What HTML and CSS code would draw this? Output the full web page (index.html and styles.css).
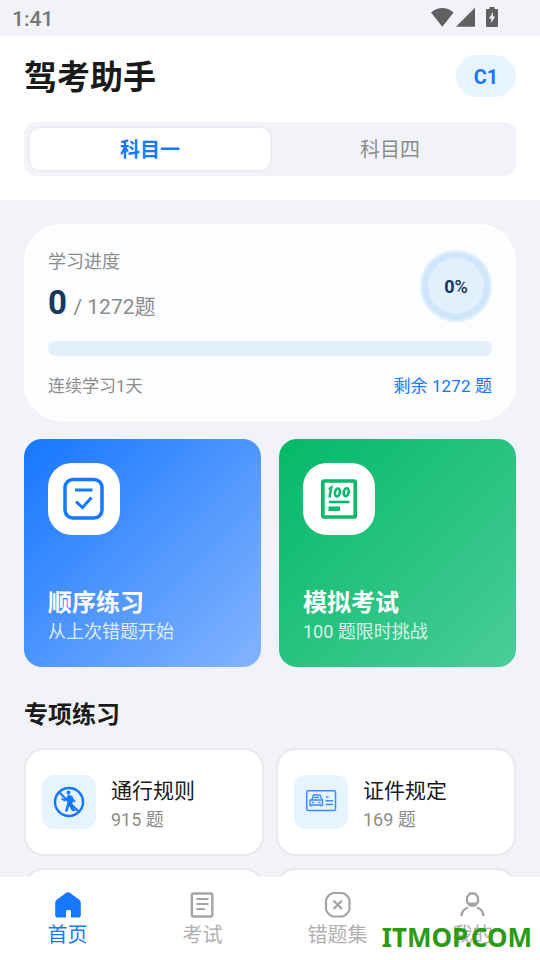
FILE: index.html
```html
<!DOCTYPE html>
<html lang="zh-CN">
<head>
<meta charset="UTF-8">
<title>驾考助手</title>
<link rel="stylesheet" href="styles.css">
</head>
<body>
<div class="app">
  <div class="status">
    <span class="clock">1:41</span>
    <svg class="status-icons" width="70" height="22" viewBox="0 0 70 22">
      <path d="M1 5.4Q12.3-3.4 23.6 5.4L12.3 19.800Z"/>
      <path d="M26 19.800H45V.8Z"/>
      <path fill-rule="evenodd" d="M59.5 0h5v2H67q1 0 1 1v16q0 1-1 1H57q-1 0-1-1V3q0-1 1-1h2.500zM63 5l-4 6.500h2.300v4.500l3.700-6.500h-2z"/>
    </svg>
  </div>
  <header class="header">
    <div class="heading">
      <h1>驾考助手</h1>
      <span class="license">C1</span>
    </div>
    <div class="tabs">
      <div class="tab tab-active">科目一</div>
      <div class="tab">科目四</div>
    </div>
  </header>
  <main class="content">
    <section class="progress">
      <div class="progress-top">
        <div>
          <div class="progress-label">学习进度</div>
          <div class="progress-count"><b>0</b><span>/ 1272题</span></div>
        </div>
        <div class="ring"><b>0</b>%</div>
      </div>
      <div class="bar"></div>
      <div class="progress-foot"><span>连续学习1天</span><span class="left">剩余 1272 题</span></div>
    </section>
    <section class="features">
      <div class="feature blue">
        <div class="feature-icon">
          <svg width="72" height="72" viewBox="0 0 72 72" fill="none" stroke="#1677ff">
            <rect x="17" y="16.500" width="37" height="38.500" rx="8" stroke-width="3.500"/>
            <path d="M27 27H44.500M28 38.500L34.500 44.500L43.500 34.500" stroke-width="3"/>
          </svg>
        </div>
        <h2>顺序练习</h2>
        <p>从上次错题开始</p>
      </div>
      <div class="feature green">
        <div class="feature-icon">
          <svg width="72" height="72" viewBox="0 0 72 72" fill="none" stroke="#07ba6b">
            <rect x="19.800" y="18" width="32.500" height="36" rx="1.500" stroke-width="3.700"/>
            <path d="M26 39H46.500" stroke-width="2.600"/>
            <path d="M25.500 45.700H37" stroke-width="4.500"/>
            <path d="M25.800 26.200L28.200 24.500L26.500 34.500" stroke-width="2.600"/>
            <ellipse cx="34.400" cy="29.400" rx="2.400" ry="4" transform="rotate(12 34.400 29.400)" stroke-width="2.600"/>
            <ellipse cx="43.200" cy="29.200" rx="2.400" ry="4" transform="rotate(12 43.200 29.200)" stroke-width="2.600"/>
          </svg>
        </div>
        <h2>模拟考试</h2>
        <p>100 题限时挑战</p>
      </div>
    </section>
    <h3 class="section-title">专项练习</h3>
    <section class="topics">
      <div class="topic">
        <div class="topic-icon">
          <svg width="54" height="54" viewBox="0 0 54 54" fill="none" stroke="#1677ff">
            <circle cx="27" cy="27" r="14" stroke-width="2.400"/>
            <path d="M17.500 17.500L36.500 36.500" stroke-width="2.200"/>
            <circle cx="26.500" cy="17.500" r="1.900" fill="#1677ff" stroke="none"/>
            <path d="M25.500 19.500L30.500 21L31.500 26L29.500 30L33.500 36H30L27 31L25.500 36.500H23L25.500 27Z" fill="#1677ff" stroke="none"/>
            <path d="M27 21.500L22.500 25.500L19.500 23.500M30 23L33 27" stroke-width="1.700"/>
          </svg>
        </div>
        <div class="topic-text"><div class="topic-name">通行规则</div><div class="topic-count">915 题</div></div>
      </div>
      <div class="topic">
        <div class="topic-icon">
          <svg width="54" height="54" viewBox="0 0 54 54" fill="none" stroke="#3c8cff">
            <rect x="12.700" y="15.700" width="28.800" height="19.800" rx="1.500" stroke-width="1.500"/>
            <path d="M18 24.500L19.500 20H26L28 24.500M16 25H28.500V30H16ZM17.500 30V31.500M27 30V31.500" stroke-width="1.400"/>
            <path d="M20 22.500H25M18 27.500H20M24.500 27.500H26.500" stroke-width="1.600"/>
            <path d="M32 22H34.500M31.500 25.800H39M31.500 29.500H39" stroke-width="1.600"/>
          </svg>
        </div>
        <div class="topic-text"><div class="topic-name">证件规定</div><div class="topic-count">169 题</div></div>
      </div>
      <div class="topic"></div>
      <div class="topic"></div>
    </section>
  </main>
  <nav class="nav">
    <div class="nav-item nav-active">
      <svg width="28" height="28" viewBox="0 0 28 28"><path fill="#1677ff" d="M12.500 1.600Q14 .7 15.500 1.600L25.500 9Q26.800 10 26.800 11.500V24.500Q26.800 26.500 24.800 26.500H17V20.500Q17 19 15.500 19H13.500Q12 19 12 20.500V26.500H3.200Q1.200 26.500 1.200 24.500V11.500Q1.200 10 2.500 9Z"/></svg>
      <span>首页</span>
    </div>
    <div class="nav-item">
      <svg width="28" height="28" viewBox="0 0 28 28" fill="none" stroke="#a4a4a4" stroke-width="2"><rect x="2.800" y="2.500" width="20.500" height="23" rx="1.500" stroke-width="2.400"/><path d="M7.500 8H19.500M7.500 13H19.500M7.500 18H16"/></svg>
      <span>考试</span>
    </div>
    <div class="nav-item">
      <svg width="28" height="28" viewBox="0 0 28 28" fill="none" stroke="#a4a4a4" stroke-width="2.200"><path d="M9 2H18.500Q24 4 25.500 9V18.500Q24 23.500 18.500 25.500H9Q3.500 23.500 2 18.500V9Q3.500 4 9 2Z"/><path d="M9.500 9.500L18 18M18 9.500L9.500 18"/></svg>
      <span>错题集</span>
    </div>
    <div class="nav-item">
      <svg width="28" height="28" viewBox="0 0 28 28" fill="none" stroke="#a4a4a4" stroke-width="2.300"><path d="M11 2.500H16L19 6V11L16 14.500H11L8 11V6Z" stroke-linejoin="round"/><path d="M9.500 13H17.500" stroke-width="3"/><path d="M2.500 25Q3 18.500 9 16.500M18 16.500Q24 18.500 24.500 25"/></svg>
      <span>我的</span>
    </div>
    <div class="brand">ITMOP.COM</div>
  </nav>
</div>
</body>
</html>
```
FILE: styles.css
```css
* { box-sizing: border-box; }
body, h1, h2, h3, p { margin: 0; }
body {
  font-family: Roboto, "Noto Sans CJK SC", sans-serif;
  color: #1a1a1a;
  background: #f2f3f8;
}
.app {
  width: 540px;
  height: 960px;
  overflow: hidden;
  display: flex;
  flex-direction: column;
}
.status {
  flex: none;
  height: 36px;
  padding: 0 40px 0 12px;
  display: flex;
  justify-content: space-between;
  align-items: center;
  color: #737476;
}
.clock { font-size: 21px; font-weight: 500; line-height: 36px; padding-top: 2px; }
.status-icons { fill: #5f6062; }
.header {
  flex: none;
  height: 164px;
  padding: 19px 24px 0;
  background: #fff;
}
.heading {
  height: 42px;
  display: flex;
  justify-content: space-between;
  align-items: center;
}
h1 { padding-top: 4px; font-size: 33px; line-height: 42px; font-weight: 700; }
.license {
  width: 60px;
  height: 42px;
  border-radius: 21px;
  background: #e6f4ff;
  color: #1677ff;
  font-size: 20px;
  font-weight: 700;
  line-height: 44px;
  text-align: center;
}
.tabs {
  height: 54px;
  margin-top: 25px;
  padding: 6px;
  display: flex;
  background: #f2f3f8;
  border-radius: 12px;
}
.tab {
  flex: 1;
  border-radius: 9px;
  font-size: 20px;
  line-height: 44px;
  text-align: center;
  color: #8c8c8c;
}
.tab-active {
  background: #fff;
  color: #1677ff;
  font-weight: 700;
  box-shadow: 0 0 2px #ccced2;
}
.content { flex: 1; min-height: 0; overflow: hidden; padding: 24px 24px 0; }
.progress {
  height: 197px;
  padding: 22px 22px 0;
  border: 2px solid #fff;
  border-radius: 38px;
  background: #fbfdff;
  color: #8c8c8c;
}
.progress-top { height: 93px; display: flex; justify-content: space-between; }
.progress-label { font-size: 18px; line-height: 28px; }
.progress-count { display: flex; align-items: baseline; gap: 6.500px; font-size: 21px; line-height: 54px; }
.progress-count b { color: #17375e; font-size: 33px; }
.ring {
  width: 72px;
  height: 72px;
  margin-top: 2px;
  border-radius: 50%;
  border: 2px solid #e1effc;
  background: #e3effc;
  box-shadow: inset 0 0 0 6px #cee7fc;
  color: #17375e;
  font-size: 18px;
  font-weight: 500;
  line-height: 70px;
  text-align: center;
}
.bar { height: 15px; border-radius: 8px; background: #e3effc; }
.progress-foot { margin-top: 17px; display: flex; justify-content: space-between; font-size: 17px; line-height: 26px; }
.left { color: #1677ff; letter-spacing: .1px; }
.features { margin-top: 18px; display: grid; grid-template-columns: 1fr 1fr; gap: 18px; }
.feature { height: 228px; padding: 24px; border-radius: 18px; color: #fff; }
.blue { background: linear-gradient(135deg, #1677ff, #84b4ff); }
.green { background: linear-gradient(135deg, #04b968, #4acd98); }
.feature-icon { width: 72px; height: 72px; border-radius: 24px; background: #fff; }
.feature-icon svg { display: block; }
.feature h2 { margin-top: 51px; font-size: 24px; line-height: 34px; }
.feature p { margin-top: -1px; font-size: 18px; line-height: 26px; opacity: .8; }
.section-title { margin-top: 30px; font-size: 24px; line-height: 36px; }
.topics { margin-top: 15px; display: grid; grid-template-columns: 240px 240px; gap: 12px; }
.topic {
  height: 108px;
  padding: 0 16px;
  display: flex;
  align-items: center;
  gap: 15px;
  border: 2px solid #e8e9ee;
  border-radius: 20px;
  background: #fff;
}
.topic-icon { width: 54px; height: 54px; border-radius: 12px; background: #e6f4ff; }
.topic-icon svg { display: block; }
.topic-text { padding-top: 3px; }
.topic-name { font-size: 21px; line-height: 32px; }
.topic-count { font-size: 18px; line-height: 26px; color: #8c8c8c; }
.nav {
  position: relative;
  flex: none;
  height: 83px;
  padding-top: 14px;
  display: grid;
  grid-template-columns: repeat(4, 1fr);
  background: #fff;
  box-shadow: 0 0 1px #e9eaee;
}
.nav-item { display: flex; flex-direction: column; align-items: center; color: #b0b0b0; font-size: 20px; line-height: 33px; }
.nav-active { color: #1677ff; }
.brand {
  position: absolute;
  right: 8px;
  bottom: 6px;
  color: #2a9a17;
  font: 700 26px/34px "Noto Sans", sans-serif;
}
```
